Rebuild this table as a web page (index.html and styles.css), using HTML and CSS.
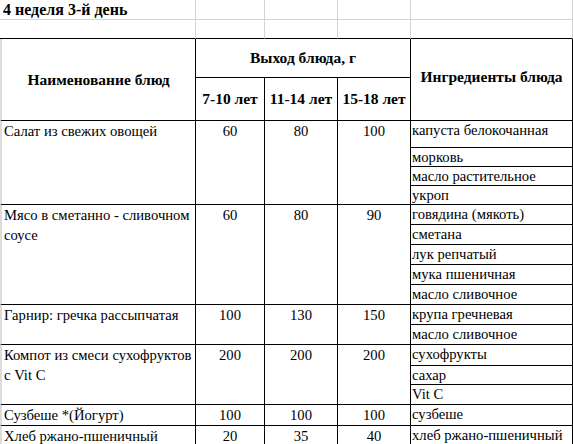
FILE: index.html
```html
<!DOCTYPE html>
<html lang="ru">
<head>
<meta charset="utf-8">
<title>4 неделя 3-й день</title>
<link rel="stylesheet" href="styles.css">
</head>
<body>
<table class="sheet">
  <colgroup>
    <col class="c-a"><col class="c-b"><col class="c-c"><col class="c-d"><col class="c-e">
  </colgroup>
  <tr class="r-title">
    <td class="g title">4 неделя 3-й день</td><td class="g"></td><td class="g"></td><td class="g"></td><td class="g"></td>
  </tr>
  <tr class="r-blank">
    <td class="g top"></td><td class="g top"></td><td class="g top"></td><td class="g top"></td><td class="g top"></td>
  </tr>
  <tr class="r-h1">
    <th class="hd first" rowspan="2">Наименование блюд</th>
    <th class="hd" colspan="3">Выход блюда, г</th>
    <th class="hd hd-ing" rowspan="2">Ингредиенты блюда</th>
  </tr>
  <tr class="r-h2">
    <th class="hd">7-10 лет</th><th class="hd">11-14 лет</th><th class="hd">15-18 лет</th>
  </tr>

  <tr class="h27">
    <td class="dish first" rowspan="4">Салат из свежих овощей</td>
    <td class="num" rowspan="4">60</td><td class="num" rowspan="4">80</td><td class="num" rowspan="4">100</td>
    <td class="ing">капуста белокочанная</td>
  </tr>
  <tr class="h18"><td class="ing">морковь</td></tr>
  <tr class="h19"><td class="ing">масло растительное</td></tr>
  <tr class="h18"><td class="ing">укроп</td></tr>

  <tr class="h20">
    <td class="dish first" rowspan="5">Мясо в сметанно - сливочном соусе</td>
    <td class="num" rowspan="5">60</td><td class="num" rowspan="5">80</td><td class="num" rowspan="5">90</td>
    <td class="ing">говядина (мякоть)</td>
  </tr>
  <tr class="h20"><td class="ing">сметана</td></tr>
  <tr class="h20"><td class="ing">лук репчатый</td></tr>
  <tr class="h20"><td class="ing">мука пшеничная</td></tr>
  <tr class="h20"><td class="ing">масло сливочное</td></tr>

  <tr class="h20">
    <td class="dish first" rowspan="2">Гарнир: гречка рассыпчатая</td>
    <td class="num" rowspan="2">100</td><td class="num" rowspan="2">130</td><td class="num" rowspan="2">150</td>
    <td class="ing">крупа гречневая</td>
  </tr>
  <tr class="h20"><td class="ing">масло сливочное</td></tr>

  <tr class="h21">
    <td class="dish first" rowspan="3">Компот из смеси сухофруктов с Vit C</td>
    <td class="num" rowspan="3">200</td><td class="num" rowspan="3">200</td><td class="num" rowspan="3">200</td>
    <td class="ing">сухофрукты</td>
  </tr>
  <tr class="h19"><td class="ing">сахар</td></tr>
  <tr class="h20"><td class="ing">Vit C</td></tr>

  <tr class="h20">
    <td class="dish first">Сузбеше *(Йогурт)</td>
    <td class="num">100</td><td class="num">100</td><td class="num">100</td>
    <td class="ing">сузбеше</td>
  </tr>
  <tr class="h20">
    <td class="dish first">Хлеб ржано-пшеничный</td>
    <td class="num">20</td><td class="num">35</td><td class="num">40</td>
    <td class="ing">хлеб ржано-пшеничный</td>
  </tr>
</table>
</body>
</html>
```

FILE: styles.css
```css
html, body {
  margin: 0;
  padding: 0;
  background: #ffffff;
}

body {
  font-family: "Liberation Serif", "Times New Roman", serif;
  font-size: 14.67px;
  color: #000000;
}

.sheet {
  border-collapse: separate;
  border-spacing: 0;
  table-layout: fixed;
  width: 573px;
}

.c-a { width: 196px; }
.c-b { width: 69px; }
.c-c { width: 73px; }
.c-d { width: 73px; }
.c-e { width: 162px; }

.sheet td, .sheet th {
  padding: 0 2px;
  vertical-align: top;
  overflow: hidden;
  white-space: nowrap;
  border-right: 1px solid #000;
  border-bottom: 1px solid #000;
}

.r-title { height: 20px; }
.r-blank { height: 19px; }
.r-h1 { height: 39px; }
.r-h2 { height: 43px; }
.h18 { height: 18px; }
.h19 { height: 19px; }
.h20 { height: 20px; }
.h21 { height: 21px; }
.h27 { height: 27px; }

.sheet td.g {
  border-right: 1px solid #d4d4d4;
  border-bottom: 1px solid #d4d4d4;
}
.sheet td.g.top {
  border-bottom: 1px solid #000;
}

.sheet .title {
  font-weight: bold;
  font-size: 16px;
  line-height: 19px;
  padding-left: 3px;
}

.sheet .hd {
  font-weight: bold;
  font-size: 15.5px;
  text-align: center;
  vertical-align: middle;
  line-height: 18px;
}

.sheet .hd-ing {
  padding-bottom: 5px;
}

.sheet .first {
  border-left: 2px solid #dcdcdc;
}

.sheet .dish {
  white-space: normal;
  line-height: 20px;
  padding-top: 0;
}

.sheet .num {
  text-align: center;
  line-height: 20px;
}

.sheet .ing {
  line-height: 18px;
  padding-left: 1px;
}
```
